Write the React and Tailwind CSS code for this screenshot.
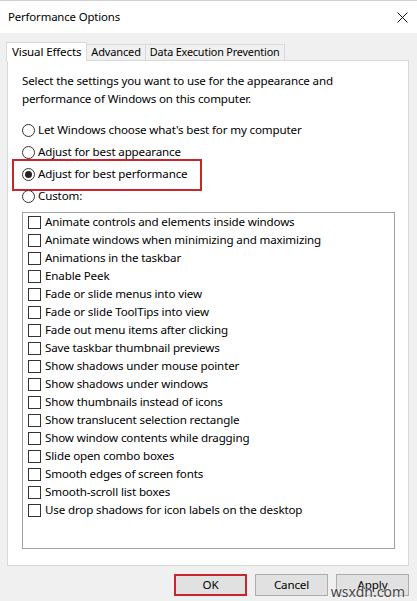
import React from 'react'

const effects = [
  'Animate controls and elements inside windows',
  'Animate windows when minimizing and maximizing',
  'Animations in the taskbar',
  'Enable Peek',
  'Fade or slide menus into view',
  'Fade or slide ToolTips into view',
  'Fade out menu items after clicking',
  'Save taskbar thumbnail previews',
  'Show shadows under mouse pointer',
  'Show shadows under windows',
  'Show thumbnails instead of icons',
  'Show translucent selection rectangle',
  'Show window contents while dragging',
  'Slide open combo boxes',
  'Smooth edges of screen fonts',
  'Smooth-scroll list boxes',
  'Use drop shadows for icon labels on the desktop',
]

const modes = [
  "Let Windows choose what's best for my computer",
  'Adjust for best appearance',
  'Adjust for best performance',
  'Custom:',
]

function Radio({ label, checked, marked }) {
  return (
    <div className="relative flex items-center h-[22px]">
      <span className="w-[13px] h-[13px] rounded-full border border-[#333] bg-white flex items-center justify-center">
        {checked && <span className="w-[7px] h-[7px] rounded-full bg-[#222]" />}
      </span>
      <span className="ml-[3px]">{label}</span>
      {marked && (
        <div className="absolute left-[-10px] top-[-4px] w-[190px] h-[32px] border-2 border-[#c8262e]" />
      )}
    </div>
  )
}

export default function App() {
  return (
    <div
      className="relative w-[417px] h-[601px] bg-[#f0f0f0] text-[11.6px] tracking-[-0.15px] text-black overflow-hidden flex flex-col"
      style={{ fontFamily: '"Noto Sans", "Segoe UI", sans-serif' }}
    >
      {/* title bar */}
      <div className="h-[33px] bg-white border-t border-[#cfcfcf] flex items-center justify-between pl-2 pr-[9px]">
        <span className="text-[11.4px]">Performance Options</span>
        <svg width="11" height="11" viewBox="0 0 11 11" className="text-[#111]">
          <path d="M0.5 0.5 L10.5 10.5 M10.5 0.5 L0.5 10.5" stroke="currentColor" strokeWidth="1" />
        </svg>
      </div>

      {/* tabs */}
      <div className="mt-[9px] pl-[6px] flex items-end h-[18px]">
        <div className="h-[19px] px-[5px] bg-white border border-b-0 border-[#d9d9d9] flex items-center relative z-10 -mb-px">
          Visual Effects
        </div>
        <div className="h-[16px] px-[4px] text-[11px] border border-b-0 border-l-0 border-[#d9d9d9] flex items-center">
          Advanced
        </div>
        <div className="h-[16px] px-[4px] text-[10.8px] border border-b-0 border-l-0 border-[#d9d9d9] flex items-center">
          Data Execution Prevention
        </div>
      </div>

      {/* panel */}
      <div className="ml-[7px] w-[402px] h-[506px] bg-white border border-[#d9d9d9] pl-[14px] pt-[11px]">
        <p className="leading-[18px]">
          Select the settings you want to use for the appearance and
          <br />
          performance of Windows on this computer.
        </p>
        <div className="mt-[11px]">
          {modes.map((m, i) => (
            <Radio key={m} label={m} checked={i === 2} marked={i === 2} />
          ))}
        </div>
        <div className="mt-[5px] w-[373px] h-[337px] border border-[#a0a0a0]">
          {effects.map((e) => (
            <div key={e} className="flex items-center h-[18px] pl-[5px]">
              <span className="w-[13px] h-[13px] border border-[#333] bg-white" />
              <span className="ml-[4px]">{e}</span>
            </div>
          ))}
        </div>
      </div>

      {/* buttons */}
      <div className="mt-[8px] flex justify-end gap-[8px] pr-[8px]">
        <button className="w-[73px] h-[22px] bg-[#e1e1e1] border-2 border-[#c8262e]">OK</button>
        <button className="w-[73px] h-[22px] bg-[#e1e1e1] border border-[#adadad]">Cancel</button>
        <button className="w-[73px] h-[22px] bg-[#e1e1e1] border border-[#adadad]">Apply</button>
      </div>

      <span
        className="absolute right-[12px] bottom-[2px] text-[14px] tracking-normal text-[#444] leading-none"
        style={{ textShadow: '0 0 2px #fff, 0 0 2px #fff' }}
      >
        wsxdn.com
      </span>
    </div>
  )
}
